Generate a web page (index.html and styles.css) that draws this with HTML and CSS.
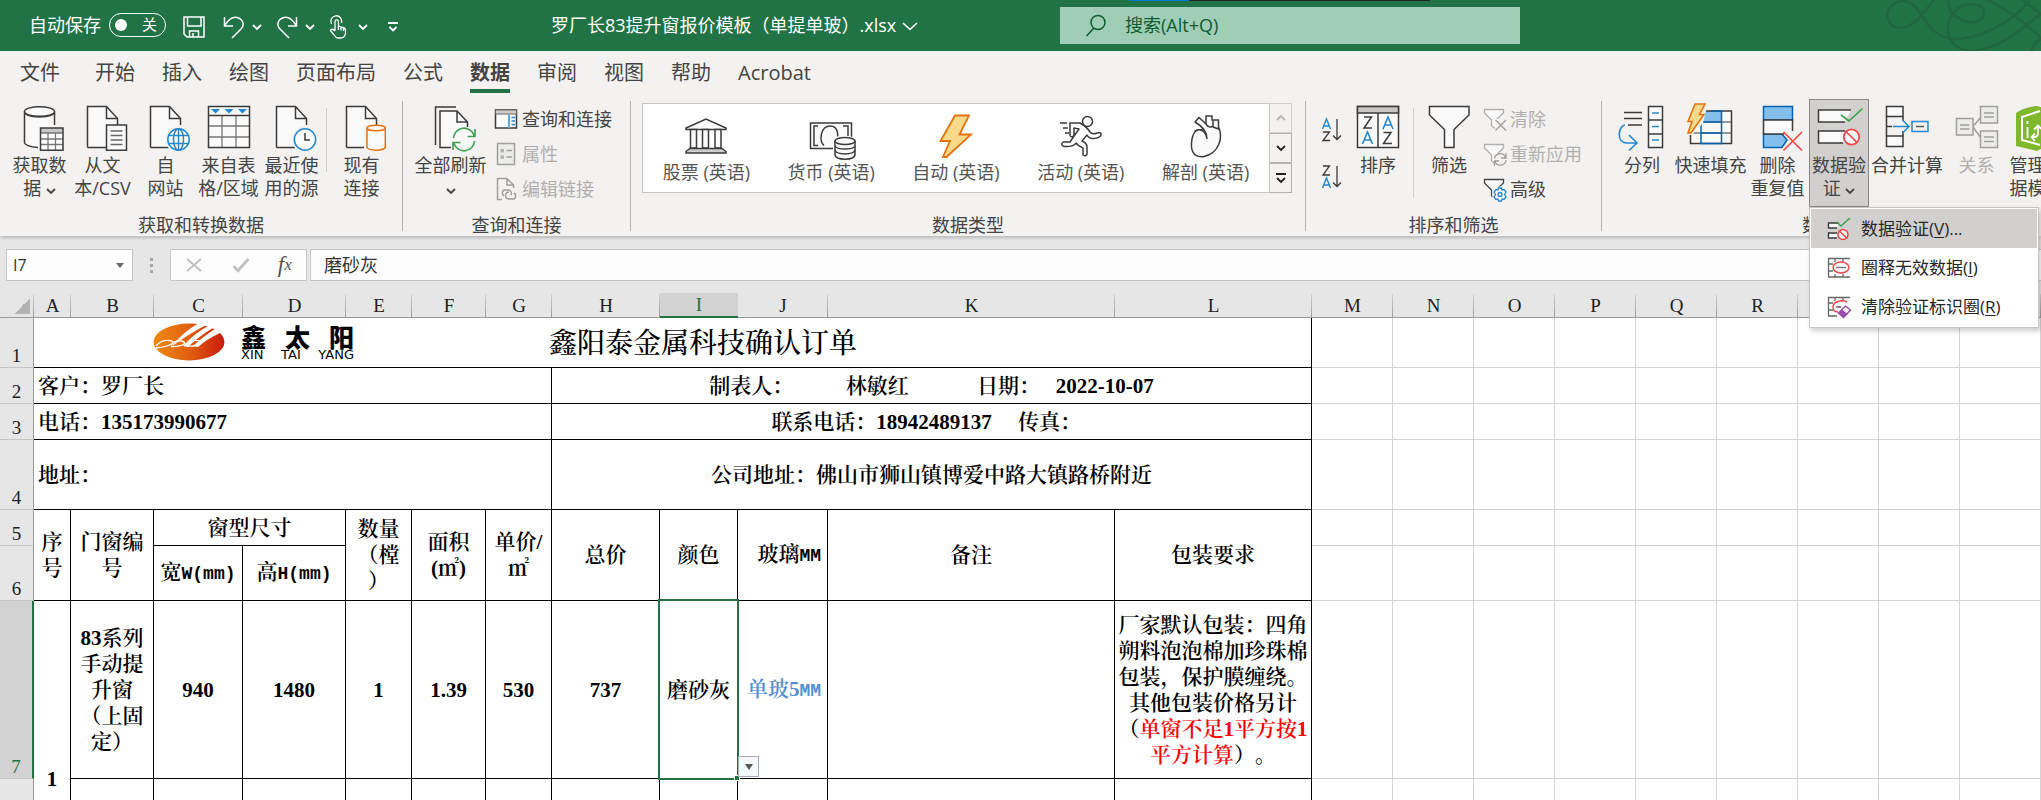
FILE: index.html
```html
<!DOCTYPE html>
<html lang="zh-CN">
<head>
<meta charset="utf-8">
<title>罗厂长83提升窗报价模板（单提单玻）.xlsx</title>
<link rel="stylesheet" href="styles.css">
</head>
<body>
<svg class="defs" aria-hidden="true">
  <defs>
    <symbol id="page" viewBox="0 0 48 46"><path d="M39 15V13L27.500 1.500H8.500V42.500H32" fill="#fafafa" stroke="none"/><path d="M8.500 42.500V1.500H27.500L38.500 13.500V20M27.500 1.500V13.500H38.500M8.500 42.500H27" fill="none" stroke="#3b3b3b" stroke-width="1.500"/></symbol>
    <symbol id="chev" viewBox="0 0 10 8"><path d="M1 2L5 6L9 2" fill="none" stroke="currentColor" stroke-width="1.800"/></symbol>
    <symbol id="funnel" viewBox="0 0 24 24"><path d="M2.500 2.500H21.500V6L14 13V22L9.500 19V13L2.500 6Z" fill="#fafafa" stroke="currentColor" stroke-width="1.300"/></symbol>
  </defs>
</svg>

<header class="titlebar">
  <span class="strip"></span>
  <svg class="swirl" width="161" height="51" viewBox="0 0 161 51"><g fill="none" stroke="#20663f" stroke-width="2.500"><path d="M54 0C44 12 34 27 22 28C6 28 4 12 12 5C24 -4 34 3 41 14C48 26 58 40 78 39C108 37 138 16 150 0"/><path d="M68 0C68 6 71 12 75 15C84 24 102 26 104 13C104 2 86 2 76 10C66 20 66 34 72 42C78 49 86 51 92 51C122 49 144 26 161 14"/><path d="M108 0C125 9 145 22 161 38M143 0C150 6 155 10 161 14M151 51C153 45 157 41 161 39"/></g></svg>
  <span class="save-label" id="auto">自动保存</span>
  <button class="toggle" aria-labelledby="auto"><i></i>关</button>
  <div class="quick">
    <button class="q save" aria-label="保存"><svg width="22" height="22" viewBox="0 0 22 22"><path d="M1 1H21V21H4L1 18ZM4.500 1V10H18V1M6.500 21V15H15.500V21M10 21V17" fill="none" stroke="#fff" stroke-width="1.500"/></svg></button>
    <button class="q undo" aria-label="撤销"><svg width="22" height="22" viewBox="0 0 22 22"><path d="M1.500 1V10H10M2 9C6 3 10 0.500 14 1.500C20 3 22 9 18 13L9 22" fill="none" stroke="#fff" stroke-width="1.500"/></svg></button>
    <button class="q qc" aria-label="撤销选项"><svg width="10" height="8"><use href="#chev"/></svg></button>
    <button class="q undo" aria-label="恢复"><svg width="22" height="22" viewBox="0 0 22 22"><path d="M20.500 1V10H12M20 9C16 3 12 0.500 8 1.500C2 3 0 9 4 13L13 22" fill="none" stroke="#fff" stroke-width="1.500"/></svg></button>
    <button class="q qc" aria-label="恢复选项"><svg width="10" height="8"><use href="#chev"/></svg></button>
    <button class="q touch" aria-label="触摸/鼠标模式"><svg width="18" height="24" viewBox="0 0 18 24"><g fill="none" stroke="#fff" stroke-width="1.300"><path d="M2.500 9A5.500 5.500 0 1 1 12.500 8"/><path d="M6 16V6.500A1.700 1.700 0 0 1 9.400 6.500V11L14 12.500Q16.500 13 16.500 15.500V18Q16 23 11.500 23H9Q7 23 5.500 20.500L1.500 15.500C2 13.500 4 14 6 16M9.400 11V15M12 12V15.500M14.500 12.800V16"/></g></svg></button>
    <button class="q qc" aria-label="触摸选项"><svg width="10" height="8"><use href="#chev"/></svg></button>
    <button class="q" aria-label="自定义快速访问工具栏"><svg width="12" height="12" viewBox="0 0 12 12"><path d="M1 2H11M2.500 6L6 9.500L9.500 6" fill="none" stroke="#fff" stroke-width="1.800"/></svg></button>
  </div>
  <button class="doc">罗厂长83提升窗报价模板（单提单玻）.xlsx<svg width="16" height="10" viewBox="0 0 16 10"><path d="M1 2L8 8.500L15 2" fill="none" stroke="#fff" stroke-width="1.600"/></svg></button>
  <label class="search"><svg width="22" height="24" viewBox="0 0 22 24"><path d="M1.500 22L8.500 14.500M20 8.500A7 7 0 1 1 6 8.500A7 7 0 0 1 20 8.500Z" fill="none" stroke="#0e5c2f" stroke-width="1.500"/></svg><input type="text" placeholder="搜索(Alt+Q)" aria-label="搜索"></label>
</header>

<nav class="tabs">
  <button class="first">文件</button><button>开始</button><button>插入</button><button>绘图</button><button>页面布局</button><button>公式</button><button class="on">数据</button><button>审阅</button><button>视图</button><button>帮助</button><button>Acrobat</button>
</nav>

<section class="ribbon">
  <div class="group g1">
    <div class="tools">
      <button class="big"><svg width="48" height="46" viewBox="0 0 48 46"><path d="M8.500 6.500V38C10 41 16 42.500 23 42.500H38.500V6.500" fill="#fafafa"/><g fill="none" stroke="#3b3b3b" stroke-width="1.500"><path d="M38.500 20V6.500C38 10.500 31 12 23.500 12S9 10.500 8.500 6.500V38C10 41 16 42 22 42.500"/><ellipse cx="23.500" cy="6.500" rx="15" ry="4.800" fill="#fafafa"/></g><path d="M24.500 23H47V45.300H24.500Z" fill="#fff"/><path d="M24.500 23H47V28H24.500Z" fill="#c8c6c4"/><path d="M24.500 28H47M24.500 34H47M24.500 39.500H47M32 28V45M39.500 28V45" stroke="#777" fill="none" stroke-width="1.300"/><path d="M24.500 23H47V45.300H24.500Z" fill="none" stroke="#3b3b3b" stroke-width="1.500"/></svg><span>获取数<br>据 <svg width="10" height="8"><use href="#chev"/></svg></span></button>
      <button class="big"><svg width="48" height="46"><use href="#page"/><path d="M27.500 20H47.500V45.200H27.500Z" fill="#fafafa" stroke="#3b3b3b" stroke-width="1.500"/><path d="M31.500 26H43.500M31.500 30.500H43.500M31.500 35H43.500M31.500 39.500H43.500" stroke="#666" stroke-width="1.300"/></svg><span>从文<br>本/CSV</span></button>
      <button class="big"><svg width="48" height="46"><use href="#page"/><circle cx="36.500" cy="34.500" r="13" fill="#f3f2f1"/><g fill="#fafafa" stroke="#2488d0" stroke-width="1.500"><circle cx="36.500" cy="34.500" r="10.700"/><ellipse cx="36.500" cy="34.500" rx="5" ry="10.700"/><path d="M36.500 24V45M27 30.500H46M27 38.500H46" fill="none"/></g></svg><span>自<br>网站</span></button>
      <button class="big"><svg width="48" height="46" viewBox="0 0 48 46"><path d="M3.500 1.500H44.500V42.500H3.500Z" fill="#fafafa"/><path d="M3.500 21H44.500M3.500 32H44.500M17 10.500V42M31 10.500V42" stroke="#777" stroke-width="1.300"/><path d="M3.500 1.500H44.500V42.500H3.500ZM3.500 10.500H44.500" fill="none" stroke="#3b3b3b" stroke-width="1.500"/><path d="M6 4H15L10.500 8.500ZM19.500 4H28.500L24 8.500ZM33 4H42L37.500 8.500Z" fill="#2488d0"/></svg><span>来自表<br>格/区域</span></button>
      <button class="big"><svg width="48" height="46"><use href="#page"/><circle cx="37" cy="34.500" r="13" fill="#f3f2f1"/><circle cx="37" cy="34.500" r="10.700" fill="#fafafa" stroke="#2488d0" stroke-width="1.500"/><path d="M37 28V35H42" fill="none" stroke="#3b3b3b" stroke-width="1.500"/></svg><span>最近使<br>用的源</span></button>
      <i class="minisep"></i>
      <button class="big"><svg width="48" height="46"><use href="#page"/><path d="M26 20H49V46H26Z" fill="#f3f2f1"/><path d="M29 23.500V42.500C31 46 45 46 47.300 42.500V23.500" fill="#fafafa" stroke="#e3730f" stroke-width="1.500"/><ellipse cx="38.200" cy="23" rx="9.200" ry="2.800" fill="#fafafa" stroke="#e3730f" stroke-width="1.500"/></svg><span>现有<br>连接</span></button>
    </div>
    <h2>获取和转换数据</h2>
  </div>
  <div class="group g2">
    <div class="tools">
      <button class="big"><svg width="48" height="46" viewBox="0 0 48 46"><path d="M8.500 40V2H29" fill="none" stroke="#3b3b3b" stroke-width="1.500"/><path d="M13 42.500V6H30L41 17V42.500Z" fill="#fafafa"/><path d="M24 42.500H13V6H30L40.500 17V22M30 6V17H40.500" fill="none" stroke="#3b3b3b" stroke-width="1.500"/><circle cx="37" cy="34.500" r="12" fill="#f8f8f7"/><path d="M26.500 33A10.500 10.500 0 0 1 47 30.500M48 24V31.500H40.500M47.500 36A10.500 10.500 0 0 1 27 38.500M26 45V37.500H33.500" fill="none" stroke="#3ba14f" stroke-width="1.600"/></svg><span>全部刷新<br><svg width="10" height="8"><use href="#chev"/></svg></span></button>
      <div class="rows">
        <button><svg width="24" height="24" viewBox="0 0 24 24"><path d="M1.500 3H22.500V21H1.500Z" fill="#fafafa" stroke="#3b3b3b" stroke-width="1.500"/><path d="M1.500 3H22.500V7H1.500Z" fill="#d0cecd" stroke="#666"/><path d="M15 8V21" stroke="#5aa9e0" stroke-width="2"/><path d="M17.500 10.500H21M17.500 14H21M17.500 17.500H21" stroke="#2488d0" stroke-width="1.500"/></svg>查询和连接</button>
        <button disabled><svg width="24" height="24" viewBox="0 0 24 24"><path d="M3.500 1.500H20.500V22.500H3.500Z" fill="#ececeb" stroke="#a19f9d" stroke-width="1.500"/><path d="M6.500 7H10V10.500H6.500ZM6.500 13.500H10V17H6.500Z" fill="#b5b3b1"/><path d="M12.500 8.500H18M12.500 15H18" stroke="#a19f9d" stroke-width="1.500"/></svg>属性</button>
        <button disabled><svg width="24" height="24" viewBox="0 0 24 24"><path d="M8 22.500H3.500V1.500H13L19.500 8V11M13 1.500V8H19.500" fill="none" stroke="#a19f9d" stroke-width="1.500"/><path d="M10 19A3.500 3.500 0 0 1 10 13H15A3.500 3.500 0 0 1 17 18M15 15A3.500 3.500 0 0 0 15 22H20A3.500 3.500 0 0 0 20 16" fill="none" stroke="#a19f9d" stroke-width="1.500"/></svg>编辑链接</button>
      </div>
    </div>
    <h2>查询和连接</h2>
  </div>
  <div class="group g3">
    <div class="tools">
      <div class="gallery">
        <button><svg width="48" height="46" viewBox="0 0 48 46"><g fill="#fafafa" stroke="#3b3b3b" stroke-width="1.500"><path d="M4 17.500V16L24 7L44 16V17.500Z"/><path d="M8.500 17.500H14.500V36H8.500ZM20.500 17.500H26.500V36H20.500ZM33 17.500H39V36H33Z"/><path d="M4 41V39.500L8 36.500H40L44 39.500V41Z" fill="#d0cecd"/></g></svg>股票 (英语)</button>
        <button><svg width="48" height="46" viewBox="0 0 48 46"><path d="M3.500 11H44.500V36.500H3.500Z" fill="#fafafa" stroke="#3b3b3b" stroke-width="1.500"/><path d="M11 14H7V33.500H11M36 14H41V24M17 33.500C12 29 13 14 23.500 14C31 14 32 24 30 30" fill="none" stroke="#3b3b3b" stroke-width="1.500"/><path d="M26 27Q26 24 37 24T49 27V47H26Z" fill="#fff"/><g fill="#fafafa" stroke="#3b3b3b" stroke-width="1.500"><path d="M28 29V43C29 48.500 47 48.500 48 43V29"/><path d="M28 34C30 38 46 38 48 34M28 38.500C30 43 46 43 48 38.500" fill="none"/><ellipse cx="38" cy="29" rx="10" ry="3.500"/></g></svg>货币 (英语)</button>
        <button><svg width="48" height="46" viewBox="0 0 48 46"><path d="M23 3.500H37L27.500 22.500H39L14.500 45H11L18 29H8.500Z" fill="#f9d98a" stroke="#e3730f" stroke-width="1.800"/></svg>自动 (英语)</button>
        <button><svg width="48" height="46" viewBox="0 0 48 46"><g fill="none" stroke="#3b3b3b" stroke-width="1.500" stroke-linejoin="round"><circle cx="30.500" cy="9.500" r="5"/><path d="M3 11H10M6 16H11M8 21H12"/><path d="M13 24V11H23Q29 14 33 20Q35 23 40 21Q45 20 44 23Q43 26 37 26.500Q32 27 30 23L25 29Q30 31 30 35V42Q29 45 26 43V36Q21 34 19 31Q17 35 7 34.500Q3 33 6 30H13Q17 24 22 17L17 16V23Q16 26 13 24"/></g></svg>活动 (英语)</button>
        <button><svg width="48" height="46" viewBox="0 0 48 46"><g fill="#fafafa" stroke="#3b3b3b" stroke-width="1.500" stroke-linejoin="round"><path d="M13 19C20 17 26 17 31 15L37 16C41 26 37 41 22 44.500C11 46 8 38 10 27Q11 21 15 18Z"/><path d="M25 27C25 20 20 14 13 10L17 5.500L24 12V4H30V8H36.500V17L31 15M24 12C26 15 29 16 31 14V8M15 18C20 17 24 20 25 27"/></g></svg>解剖 (英语)</button>
      </div>
      <div class="scroller">
        <button disabled aria-label="上一行"><svg width="10" height="8" viewBox="0 0 10 8"><path d="M1 6L5 2L9 6" fill="none" stroke="#b5b3b1" stroke-width="1.800"/></svg></button>
        <button aria-label="下一行"><svg width="10" height="8"><use href="#chev"/></svg></button>
        <button aria-label="其他"><svg width="12" height="12" viewBox="0 0 12 12"><path d="M1 2H11M2 6L6 10L10 6" fill="none" stroke="#222" stroke-width="1.800"/></svg></button>
      </div>
    </div>
    <h2>数据类型</h2>
  </div>
  <div class="group g4">
    <div class="tools">
      <div class="az">
        <button aria-label="升序"><svg width="22" height="26" viewBox="0 0 22 26"><path d="M1.500 12L5.500 2L9.500 12M3 9H8" fill="none" stroke="#2488d0" stroke-width="1.400"/><path d="M2 15H8.500L2 23.500H9M16 2V22M12 18.500L16 22.500L20 18.500" fill="none" stroke="#3b3b3b" stroke-width="1.300"/></svg></button>
        <button aria-label="降序"><svg width="22" height="26" viewBox="0 0 22 26"><path d="M2 2H8.500L2 11H9M16 2V22M12 18.500L16 22.500L20 18.500" fill="none" stroke="#3b3b3b" stroke-width="1.300"/><path d="M1.500 24L5.500 14L9.500 24M3 21H8" fill="none" stroke="#2488d0" stroke-width="1.400"/></svg></button>
      </div>
      <button class="big sort"><svg width="48" height="46" viewBox="0 0 48 46"><path d="M3.500 1.500H44.500V42.500H3.500Z" fill="#fafafa" stroke="#3b3b3b" stroke-width="1.500"/><path d="M3.500 1.500H44.500V8H3.500Z" fill="#c8c6c4" stroke="#3b3b3b" stroke-width="1.500"/><path d="M24 8V42.500M10 12H17.500L10 23H18M29.500 27.500H37L29.500 38.500H38" fill="none" stroke="#3b3b3b" stroke-width="1.500"/><path d="M8.500 39L13.500 27L18.500 39M10.500 35H16.500M29 24L34 12L39 24M31 20H37" fill="none" stroke="#2488d0" stroke-width="1.600"/></svg><span>排序</span></button>
      <i class="minisep tall"></i>
      <button class="big"><svg width="48" height="46" viewBox="0 0 48 46"><path d="M4.500 1.500H44V10L29 24.500V42.500H19.500V24.500L4.500 10Z" fill="#fafafa" stroke="#3b3b3b" stroke-width="1.500"/></svg><span>筛选</span></button>
      <div class="rows f">
        <button disabled><svg width="25" height="25"><use href="#funnel" width="24" height="24"/><path d="M13 12H25V25H13Z" fill="#f3f2f1"/><path d="M13.500 13L24 23.500M24 13L13.500 23.500" stroke="#a19f9d" stroke-width="1.400"/></svg>清除</button>
        <button disabled><svg width="25" height="25"><use href="#funnel" width="24" height="24"/><path d="M12 11H25V25H12Z" fill="#f3f2f1"/><path d="M12.500 16.500A5.700 5.700 0 0 1 23.500 15.500M24 11V16H19M24 18A5.700 5.700 0 0 1 13 19.500M12.500 24V19H17" fill="none" stroke="#a19f9d" stroke-width="1.300"/></svg>重新应用</button>
        <button><svg width="25" height="25"><use href="#funnel" width="24" height="24"/><circle cx="18" cy="17.500" r="8" fill="#f3f2f1"/><path d="M16.500 11H19.500L20 13L22 12.500L24 15L22.500 17.500L24 20L22 22.500L20 22L19.500 24H16.500L16 22L14 22.500L12 20L13.500 17.500L12 15L14 12.500L16 13Z" fill="#fafafa" stroke="#2488d0" stroke-width="1.300"/><circle cx="18" cy="17.500" r="2" fill="none" stroke="#2488d0" stroke-width="1.300"/></svg>高级</button>
      </div>
    </div>
    <h2>排序和筛选</h2>
  </div>
  <div class="group g5">
    <div class="tools">
      <button class="big w66"><svg width="48" height="46" viewBox="0 0 48 46"><path d="M6 7.500H24M6 13.500H24M10 20H24" stroke="#3b3b3b" stroke-width="1.400"/><path d="M30.500 1.500H44.500V42.500H30.500ZM30.500 15H44.500M30.500 29H44.500" fill="#fafafa" stroke="#3b3b3b" stroke-width="1.500"/><path d="M34 8H41M34 21.500H41M34 35H41M7 20C0 21 -2 38 9 38H19M11 30L19 38L11 45.500" fill="none" stroke="#2488d0" stroke-width="1.600"/></svg><span>分列</span></button>
      <button class="big w72"><svg width="48" height="46" viewBox="0 0 48 46"><path d="M3.500 6H44.500V38.500H3.500Z" fill="#fafafa"/><path d="M14 6H34.500V17H14Z" fill="#83beec"/><path d="M3.500 17H44.500M3.500 28H44.500" stroke="#777" stroke-width="1.300"/><path d="M14 6H44.500V38.500H3.500V28" fill="none" stroke="#3b3b3b" stroke-width="1.500"/><path d="M14 17H34.500M14 28H34.500M24 6H34.500V38.500H14V17" fill="none" stroke="#0063b1" stroke-width="1.500"/><path d="M0 -2H21L16 18L5 30H-2Z" fill="#f3f2f1"/><path d="M8 -1H18L12.500 9.500H17L4 28H1L5 16.500H1Z" fill="#f9d98a" stroke="#e3730f" stroke-width="1.600"/></svg><span>快速填充</span></button>
      <button class="big"><svg width="48" height="46" viewBox="0 0 48 46"><path d="M9.500 1.500H38.500V15H9.500ZM9.500 29H28L33 35L28 42.500H9.500Z" fill="#83beec" stroke="#0063b1" stroke-width="1.500"/><path d="M38.500 26V15H9.500V29H30" fill="#fafafa" stroke="#3b3b3b" stroke-width="1.500"/><path d="M29.500 27L48 45.500M48 27L29.500 45.500" stroke="#f24444" stroke-width="1.600"/></svg><span>删除<br>重复值</span></button>
      <div class="dropwrap">
        <button class="big open" aria-expanded="true"><svg width="48" height="46" viewBox="0 0 48 46"><path d="M36 5H3.500V17H30M30 26H3.500V38H28" fill="#fafafa" stroke="#3b3b3b" stroke-width="1.500"/><path d="M26 10L34 16L47.500 3.500" fill="none" stroke="#3ba14f" stroke-width="1.700"/><circle cx="36.500" cy="32" r="7.700" fill="#fafafa" stroke="#f24444" stroke-width="1.700"/><path d="M31 26.500L42 37.500" stroke="#f24444" stroke-width="1.700"/></svg><span>数据验<br>证 <svg width="10" height="8"><use href="#chev"/></svg></span></button>
        <div class="menu" role="menu">
          <button role="menuitem" class="hot"><svg width="24" height="24" viewBox="0 0 24 24"><path d="M12 6H1.500V11H10M10 16H1.500V21H10" fill="#fafafa" stroke="#3b3b3b" stroke-width="1.400"/><path d="M10 5L14 9L23 1" fill="none" stroke="#3ba14f" stroke-width="1.500"/><circle cx="16" cy="17.500" r="5" fill="#fafafa" stroke="#f24444" stroke-width="1.500"/><path d="M12.500 14L19.500 21" stroke="#f24444" stroke-width="1.500"/></svg><span>数据验证(<u>V</u>)...</span></button>
          <button role="menuitem"><svg width="24" height="24" viewBox="0 0 24 24"><path d="M1 2.500H23M1 21H23M1.500 2V21M1 8H6M1 15H6M8 2V6M16 2V6M8 18V21M16 18V21" stroke="#666" stroke-width="1.300"/><ellipse cx="14" cy="11.500" rx="8" ry="5.500" fill="#fafafa" stroke="#f24444" stroke-width="1.400"/><path d="M9 11.500H19" stroke="#777" stroke-width="1.300"/></svg><span>圈释无效数据(<u>I</u>)</span></button>
          <button role="menuitem"><svg width="24" height="24" viewBox="0 0 24 24"><path d="M1 2.500H23M1 21H10M1.500 2V21M1 8H6M1 15H6M8 2V6M16 2V6M9 12H14" stroke="#666" stroke-width="1.300"/><path d="M20 7C14 4 6 7 6 12C6 15 8 17 11 17" fill="none" stroke="#f24444" stroke-width="1.400"/><path d="M11.500 18L18.500 11L23.500 15L16.500 22.500Z" fill="#fafafa" stroke="#8f3fa0" stroke-width="1.300"/><path d="M11.500 18L15 14.500L20 18.500L16.500 22.500Z" fill="#9b4bb0"/></svg><span>清除验证标识圈(<u>R</u>)</span></button>
        </div>
      </div>
      <button class="big w76"><svg width="48" height="46" viewBox="0 0 48 46"><path d="M3.500 1.500H20V11.500H3.500ZM3.500 31H20V41.500H3.500Z" fill="#fafafa" stroke="#3b3b3b" stroke-width="1.500"/><path d="M3.500 11.500V31M20 11.500V16M20 26V31M3.500 21.500H9" fill="none" stroke="#3b3b3b" stroke-width="1.500"/><path d="M10 21.500H26M19.500 15L26 21.500L19.500 28M29 16.500H45V26.500H29Z" fill="none" stroke="#2488d0" stroke-width="1.500"/><path d="M33 21.500H41" stroke="#555" stroke-width="1.400"/></svg><span>合并计算</span></button>
      <button class="big" disabled><svg width="48" height="46" viewBox="0 0 48 46"><g fill="#ececeb" stroke="#a19f9d" stroke-width="1.500"><path d="M20 21.500L28 12M20 22L28 33"/><path d="M3.500 13.500H20V30H3.500ZM27.500 1.500H44.500V18H27.500ZM27.500 26H44.500V42.500H27.500Z"/><path d="M7 20H16.500M7 24H16.500M31 8H41M31 12H41M31 32H41M31 36.500H41"/></g></svg><span>关系</span></button>
      <button class="big w56"><svg width="48" height="46" viewBox="0 0 48 46"><path d="M3 8L9 4.500Q18 1 24 1L45 8V36L24 46L3 41Z" fill="#7fb82d"/><path d="M27 6L9 12V35L27 40" fill="none" stroke="#fff" stroke-width="2"/><path d="M14.500 16V19M14.500 22V33M19 32Q25 33 25 28V21M21 24.500L25 20.500L29 24.500M22 36L18.500 32L22 28.500" fill="none" stroke="#fff" stroke-width="1.800"/></svg><span>管理数<br>据模型</span></button>
    </div>
    <h2>数据工具</h2>
  </div>
</section>

<section class="formula">
  <label class="namebox"><input type="text" value="I7" aria-label="名称框"><i></i></label>
  <span class="dots"><i></i><i></i><i></i></span>
  <div class="fxbox">
    <button aria-label="取消"><svg width="18" height="16" viewBox="0 0 18 16"><path d="M2 2L16 14M16 2L2 14" stroke="#c3c1bf" stroke-width="2"/></svg></button>
    <button aria-label="输入"><svg width="18" height="16" viewBox="0 0 18 16"><path d="M1.500 9L6 13.500L16.500 2" fill="none" stroke="#c3c1bf" stroke-width="3"/></svg></button>
    <button class="fx" aria-label="插入函数"><b>f</b>x</button>
  </div>
  <input class="finput" type="text" value="磨砂灰" aria-label="编辑栏">
</section>

<main class="sheet">
<table>
  <colgroup><col class="c0"><col class="ca"><col class="cb"><col class="cc"><col class="cd"><col class="ce"><col class="cf"><col class="ce"><col class="ch"><col class="ci"><col class="cj"><col class="ck"><col class="cl"><col class="cm" span="10"></colgroup>
  <thead><tr><th class="corner"><i></i></th><th>A</th><th>B</th><th>C</th><th>D</th><th>E</th><th>F</th><th>G</th><th>H</th><th class="sel">I</th><th>J</th><th>K</th><th>L</th><th>M</th><th>N</th><th>O</th><th>P</th><th>Q</th><th>R</th><th></th><th></th><th></th><th></th></tr></thead>
  <tbody>
  <tr class="r1"><th>1</th><td class="k title" colspan="12">鑫阳泰金属科技确认订单
    <div class="logo"><svg width="72" height="38" viewBox="0 0 72 38"><defs><linearGradient id="sun"><stop offset="0" stop-color="#f08a12"/><stop offset=".5" stop-color="#e0600f"/><stop offset="1" stop-color="#c8190c"/></linearGradient></defs><ellipse cx="36" cy="19" rx="35.500" ry="18.500" fill="url(#sun)"/><g fill="none" stroke="#fff" stroke-width="1.300"><path d="M3 23Q8 17 16 17.500C24 18 20 23 3 25M18 22Q22 17 28 18C36 19 30 24 18 23.500M34 21Q42 15 48 19Q44 24 34 23"/></g><path d="M46 0L53 2Q34 12 18 24Q30 9 46 0ZM55 3L60 5Q46 13 35 24L30 23Q42 10 55 3ZM62 6L67 10Q54 16 45 24L40 23Q52 12 62 6Z" fill="#fff"/></svg><div class="brand"><b><span>鑫</span><span>太</span><span>阳</span></b><small><span>XIN</span><span>TAI</span><span>YANG</span></small></div></div></td><td></td><td></td><td></td><td></td><td></td><td></td><td></td><td></td><td></td><td></td></tr>
  <tr class="r2"><th>2</th><td class="k left" colspan="7">客户：罗厂长</td><td class="k pre" colspan="5">制表人：          林敏红             日期：   2022-10-07</td><td></td><td></td><td></td><td></td><td></td><td></td><td></td><td></td><td></td><td></td></tr>
  <tr class="r2"><th>3</th><td class="k left" colspan="7">电话：135173990677</td><td class="k pre" colspan="5">联系电话：18942489137     传真：  </td><td></td><td></td><td></td><td></td><td></td><td></td><td></td><td></td><td></td><td></td></tr>
  <tr class="r4"><th>4</th><td class="k left" colspan="7">地址：</td><td class="k" colspan="5">公司地址：佛山市狮山镇博爱中路大镇路桥附近</td><td></td><td></td><td></td><td></td><td></td><td></td><td></td><td></td><td></td><td></td></tr>
  <tr class="r2"><th>5</th><td class="k" rowspan="2">序<br>号</td><td class="k" rowspan="2">门窗编<br>号</td><td class="k" colspan="2">窗型尺寸</td><td class="k" rowspan="2">数量<br>（樘<br>）</td><td class="k" rowspan="2">面积<br>(㎡)</td><td class="k" rowspan="2">单价/<br>㎡</td><td class="k" rowspan="2">总价</td><td class="k" rowspan="2">颜色</td><td class="k right" rowspan="2">玻璃<span class="mono">MM</span></td><td class="k" rowspan="2">备注</td><td class="k" rowspan="2">包装要求</td><td></td><td></td><td></td><td></td><td></td><td></td><td></td><td></td><td></td><td></td></tr>
  <tr class="r6"><th>6</th><td class="k">宽<span class="mono">W(mm)</span></td><td class="k">高<span class="mono">H(mm)</span></td><td></td><td></td><td></td><td></td><td></td><td></td><td></td><td></td><td></td><td></td></tr>
  <tr class="r7"><th class="sel">7</th><td class="k" rowspan="2">1</td><td class="k">83系列<br>手动提<br>升窗<br>（上固<br>定）</td><td class="k">940</td><td class="k">1480</td><td class="k">1</td><td class="k">1.39</td><td class="k">530</td><td class="k">737</td><td class="k active">磨砂灰<i class="ring"></i><i class="handle"></i><button class="drop" aria-label="选择"><i></i></button></td><td class="k right blue">单玻5<span class="mono">MM</span></td><td class="k"></td><td class="k">厂家默认包装：四角<br>朔料泡泡棉加珍珠棉<br>包装，保护膜缠绕。<br>其他包装价格另计<br>（<em>单窗不足1平方按1<br>平方计算</em>）。</td><td></td><td></td><td></td><td></td><td></td><td></td><td></td><td></td><td></td><td></td></tr>
  <tr class="r7"><th></th><td class="k"></td><td class="k"></td><td class="k"></td><td class="k"></td><td class="k"></td><td class="k"></td><td class="k"></td><td class="k"></td><td class="k"></td><td class="k"></td><td class="k"></td><td></td><td></td><td></td><td></td><td></td><td></td><td></td><td></td><td></td><td></td></tr>
  </tbody>
</table>
</main>
</body>
</html>
```
FILE: styles.css
```css
* { box-sizing: border-box; }
body {
  margin: 0;
  height: 100vh;
  overflow: hidden;
  display: flex;
  flex-direction: column;
  background: #e6e6e6;
  font: 18px/23px "Open Sans", "Noto Sans CJK SC", sans-serif;
  text-spacing-trim: space-all;
  color: #444;
}
button, input { font: inherit; color: inherit; border: 0; background: none; padding: 0; margin: 0; min-width: 0; }
svg { overflow: visible; flex: none; }
.defs { position: absolute; width: 0; height: 0; }

/* title bar */
.titlebar {
  position: relative;
  flex: none;
  display: flex;
  align-items: center;
  height: 51px;
  background: #217346;
  color: #fff;
  overflow: hidden;
}
.titlebar > * { flex: none; }
.strip { position: absolute; top: 0; left: 1129px; width: 301px; height: 1px; background: linear-gradient(90deg, #0078d7 60px, #222 60px); }
.swirl { position: absolute; right: 0; top: 0; }
.save-label { margin-left: 29px; width: 80px; }
.toggle {
  display: flex;
  align-items: center;
  justify-content: space-between;
  width: 57px;
  height: 24px;
  margin-bottom: 2px;
  padding: 0 8px 0 5px;
  border: 1px solid #fff;
  border-radius: 12px;
  font-size: 15px;
}
.toggle i { width: 12px; height: 12px; border-radius: 50%; background: #fff; }
.quick { display: flex; align-items: center; width: 385px; padding: 2px 0 0 17px; }
.q { display: flex; }
.save { width: 40px; }
.undo { width: 29px; }
.qc { width: 24px; }
.touch { width: 29px; }
.qc + .q:last-child { margin-left: 5px; }
.doc { display: flex; align-items: center; gap: 6px; width: 509px; }
.search {
  display: flex;
  align-items: center;
  gap: 18px;
  width: 460px;
  height: 37px;
  padding-left: 25px;
  background: #a0cdb5;
}
.search input { flex: 1; outline: 0; color: #0e5c2f; }
.search input::placeholder { color: #0e5c2f; opacity: 1; }

/* tabs */
.tabs { flex: none; display: flex; gap: 27px; height: 50px; padding: 0 20px; background: #f3f2f1; font-size: 20px; }
.tabs button { height: 42px; border-bottom: 4px solid transparent; padding-top: 4px; }
.tabs .first { margin-right: 8px; }
.tabs .on { border-color: #217346; font-weight: 700; }

/* ribbon */
.ribbon { flex: none; display: flex; height: 135px; background: #f3f2f1; position: relative; z-index: 2; box-shadow: 0 3px 3px -1px #bbb; }
.group { flex: none; display: flex; flex-direction: column; border-right: 1px solid #b3b0ad; margin-bottom: 5px; }
.group h2 { margin: 0; font: inherit; line-height: 26px; text-align: center; height: 15px; }
.tools { display: flex; height: 111px; align-items: flex-start; }
.g1 { width: 403px; }
.g1 .tools { padding-left: 8px; }
.g2 { width: 228px; }
.g2 .tools { padding-left: 11px; }
.g3 { width: 675px; }
.g3 .tools { padding: 2px 0 0 11px; }
.g4 { width: 296px; }
.g4 .tools { padding-left: 14px; }
.g5 { width: 472px; border: 0; }
.g5 .tools { padding-left: 7px; }
.big { flex: none; display: flex; flex-direction: column; align-items: center; gap: 3px; width: 63px; height: 107px; padding-top: 4px; white-space: nowrap; text-align: center; }
.g2 .big { width: 73px; }
.g4 .big { width: 64px; }
.w66.big { width: 66px; }
.w72.big { width: 71px; }
.w76.big { width: 76px; }
.w56.big { width: 57px; }
button:disabled { color: #b1afad; }
.minisep { width: 1px; height: 64px; margin: 7px 3px 0; background: #d2d0ce; }
.minisep.tall { height: 90px; margin: 7px 3px 0; }
.rows { display: flex; flex-direction: column; gap: 11px; padding: 6px 0 0 7px; }
.rows button { display: flex; align-items: center; gap: 4px; height: 24px; white-space: nowrap; }
.rows.f { padding-left: 1px; }
.rows.f button { gap: 3px; }
.gallery { display: flex; height: 90px; width: 628px; padding: 0 1px; background: #fff; border: 1px solid #c8c6c4; }
.gallery button { width: 125px; display: flex; flex-direction: column; align-items: center; padding-top: 8px; gap: 3px; white-space: nowrap; color: #555; }
.scroller { display: flex; flex-direction: column; height: 90px; width: 22px; }
.scroller button { flex: 1; display: flex; align-items: center; justify-content: center; border: 1px solid #b3b0ad; border-left: 0; color: #222; }
.scroller button:disabled { border-color: #d2d0ce; }
.az { display: flex; flex-direction: column; gap: 21px; padding: 16px 3px 0 1px; width: 26px; }
.az button { display: flex; }
.dropwrap { position: relative; }
.open.big { width: 60px; height: 108px; margin-top: -2px; padding-top: 5px; background: #d2d0ce; border: 1px solid #8a8886; }
.menu { position: absolute; z-index: 5; left: 0; top: 106px; width: 230px; padding: 1px; background: #fff; border: 1px solid #c8c6c4; box-shadow: 2px 3px 5px #0003; font-size: 17px; color: #262626; }
.menu button { display: flex; align-items: center; gap: 10px; width: 100%; height: 39px; padding-left: 16px; white-space: nowrap; }
.menu .hot { background: #d2d0ce; }
.menu u { text-underline-offset: 2px; }

/* formula bar */
.formula { flex: none; display: flex; height: 45px; padding: 13px 0 0 6px; color: #333; }
.namebox { display: flex; align-items: center; width: 127px; border: 1px solid #c6c6c6; background: #fdfdfd; padding: 0 8px 0 6px; font-size: 16px; }
.namebox input { flex: 1; }
.namebox i { border: 4px solid transparent; border-top: 5px solid #666; border-bottom: 0; }
.dots { display: flex; flex-direction: column; justify-content: center; gap: 3px; width: 37px; padding-left: 17px; }
.dots i { width: 3px; height: 3px; background: #a8a8a8; }
.fxbox { display: flex; width: 137px; justify-content: space-around; align-items: center; border: 1px solid #c6c6c6; background: #fdfdfd; margin-right: 3px; }
.fxbox button { display: flex; align-items: center; }
.fx { font: italic 17px/24px "Liberation Serif", serif; color: #555; }
.fx b { font-size: 23px; font-weight: 400; }
.finput { flex: 1; border: 1px solid #c6c6c6; border-right: 0; background: #fdfdfd; padding: 0 13px; }

/* sheet */
.sheet { flex: 1; min-height: 0; overflow: hidden; background: #fff; font: 21px/26px "Liberation Serif", "Noto Serif CJK SC", "Noto Sans CJK SC", serif; }
.sheet table { table-layout: fixed; width: 2122px; border-collapse: separate; border-spacing: 0; color: #000; }
.sheet th, .sheet td { padding: 0; }
.sheet td { position: relative; border-right: 1px solid #d4d4d4; border-bottom: 1px solid #d4d4d4; text-align: center; }
.sheet th { background: #e6e6e6; font-weight: 400; font-size: 19px; line-height: 22px; color: #222; }
.sheet thead th { height: 36px; padding-top: 13px; border-bottom: 1px solid #9b9b9b; background: linear-gradient(#d0d0d0, #9b9b9b) right bottom / 1px 23px no-repeat #e6e6e6; }
.sheet thead th.corner { padding: 0; vertical-align: bottom; }
.corner i { display: block; width: 16px; height: 16px; margin: 0 0 3px 14px; background: linear-gradient(135deg, transparent 50%, #b3b3b3 50%); }
.sheet thead .sel { background: linear-gradient(#d2d2d2, #d2d2d2) 0 100% / 100% 23px no-repeat #e6e6e6; border-bottom: 2px solid #217346; color: #217346; }
.sheet tbody th { vertical-align: bottom; border-right: 1px solid #9b9b9b; border-bottom: 1px solid #c6c6c6; }
.sheet tbody th.sel { background: #d2d2d2; border-right: 2px solid #217346; color: #217346; }
.sheet td.k { border-color: #000; font-weight: 600; white-space: nowrap; }
.sheet td.left { text-align: left; padding-left: 4px; }
.sheet td.right { text-align: right; padding-right: 6px; }
.sheet td.pre { white-space: pre; }
.sheet td.title { font-size: 28px; font-weight: 500; padding: 3px 0 0 61px; }
.mono { font-family: "Liberation Mono", monospace; font-size: 18px; }
.sheet td.blue { color: #558ed5; }
.sheet em { font-style: normal; color: #f00; }
.c0 { width: 34px; } .ca { width: 37px; } .cb { width: 83px; } .cc { width: 89px; } .cd { width: 103px; }
.ce { width: 66px; } .cf { width: 74px; } .ch { width: 108px; } .ci { width: 78px; } .cj { width: 90px; }
.ck { width: 287px; } .cl { width: 197px; } .cm { width: 81px; }
.r1 { height: 50px; } .r2 { height: 36px; } .r4 { height: 70px; } .r6 { height: 55px; } .r7 { height: 178px; }
.logo { position: absolute; left: 119px; top: 5px; display: flex; gap: 16px; }
.brand { display: flex; flex-direction: column; width: 113px; }
.brand b, .brand small { display: flex; justify-content: space-between; }
.brand b { font: 900 25px/26px "Noto Sans CJK SC", sans-serif; }
.brand small { font: 13px/12px "DejaVu Sans", sans-serif; }
.ring { position: absolute; inset: -2px; border: 2px solid #217346; z-index: 1; }
.handle { position: absolute; right: -3px; bottom: -3px; width: 6px; height: 6px; background: #217346; border: 1px solid #fff; z-index: 2; }
.drop { position: absolute; z-index: 2; right: -22px; bottom: 1px; width: 21px; height: 21px; display: flex; align-items: center; justify-content: center; background: #f7f8fa; border: 1px solid #a5acb8; }
.drop i { border: 4px solid transparent; border-top: 6px solid #555; border-bottom: 0; }
```
